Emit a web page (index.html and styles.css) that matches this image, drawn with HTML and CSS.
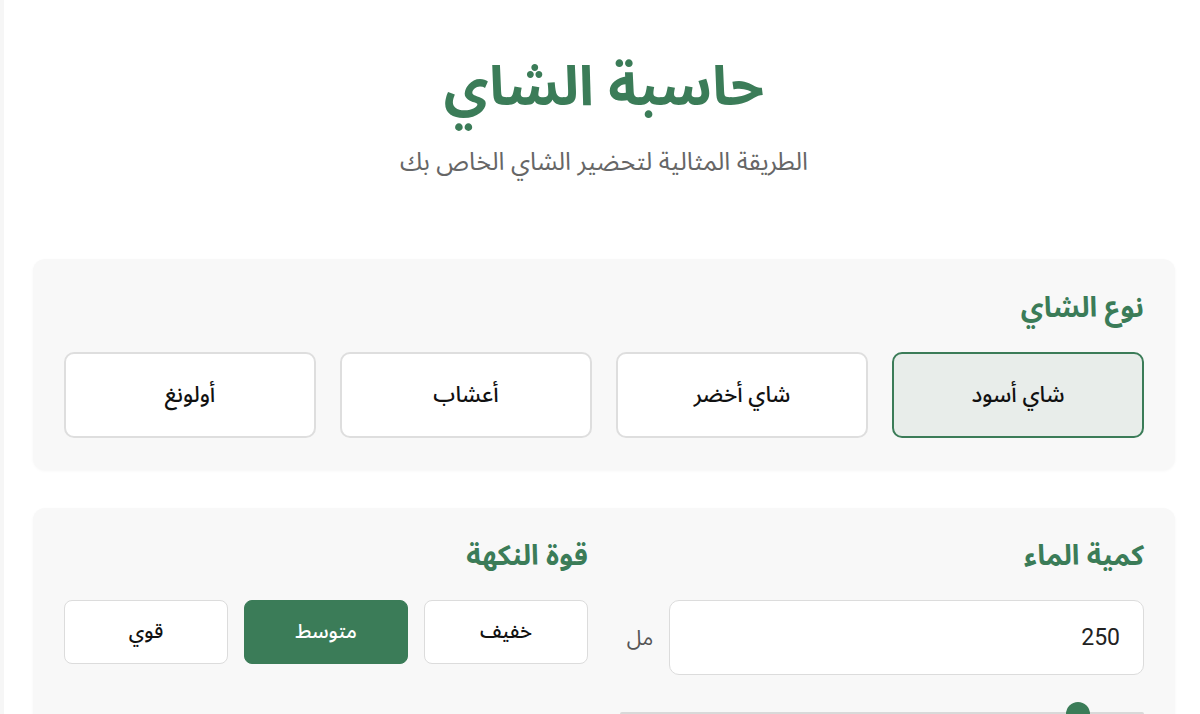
FILE: index.html
```html
<!DOCTYPE html>
<html lang="ar" dir="rtl">
<head>
<meta charset="utf-8">
<title>حاسبة الشاي</title>
<link rel="stylesheet" href="styles.css">
</head>
<body>
<div class="page">
  <header class="header">
    <h1 class="title">حاسبة الشاي</h1>
    <p class="subtitle">الطريقة المثالية لتحضير الشاي الخاص بك</p>
  </header>

  <section class="card">
    <h2 class="card-title">نوع الشاي</h2>
    <div class="type-grid">
      <button class="type-btn active">شاي أسود</button>
      <button class="type-btn">شاي أخضر</button>
      <button class="type-btn">أعشاب</button>
      <button class="type-btn">أولونغ</button>
    </div>
  </section>

  <section class="card card-two">
    <div class="col">
      <h2 class="card-title">كمية الماء</h2>
      <div class="input-row">
        <div class="num-input">250</div>
        <span class="unit">مل</span>
      </div>
      <div class="slider">
        <div class="track"></div>
        <div class="thumb"></div>
      </div>
    </div>
    <div class="col">
      <h2 class="card-title">قوة النكهة</h2>
      <div class="strength-row">
        <button class="str-btn">خفيف</button>
        <button class="str-btn active">متوسط</button>
        <button class="str-btn">قوي</button>
      </div>
    </div>
  </section>
</div>
</body>
</html>
```

FILE: styles.css
```css
* { box-sizing: border-box; }
html, body { margin: 0; padding: 0; background: #fff; }
body {
  font-family: "Noto Sans Arabic", "Noto Sans", "DejaVu Sans", sans-serif;
  color: #222;
  overflow: hidden;
  height: 714px;
  border-left: 4px solid #f6f6f6;
}
.page {
  width: 1142px;
  margin-right: 25px;
  margin-left: 29px;
}
.header {
  text-align: center;
  padding-top: 47px;
  height: 259px;
}
.title {
  margin: 0;
  font-size: 55px;
  font-weight: 700;
  color: #3b7c58;
  line-height: 82px;
}
.subtitle {
  margin: 15px 0 0;
  font-size: 25px;
  color: #666;
  line-height: 36px;
}
.card {
  background: #f8f8f8;
  border-radius: 12px;
  padding: 28px 31px 32px;
  box-shadow: 0 1px 3px rgba(0,0,0,0.04);
  margin-bottom: 38px;
}
.card-title {
  margin: 0 0 21px;
  font-size: 28px;
  font-weight: 700;
  color: #3b7c58;
  line-height: 44px;
}
.type-grid {
  display: grid;
  grid-template-columns: repeat(4, 1fr);
  gap: 24px;
}
.type-btn {
  font-family: inherit;
  height: 86px;
  border: 2px solid #dedede;
  border-radius: 10px;
  background: #fff;
  font-size: 22px;
  font-weight: 500;
  color: #111;
}
.type-btn.active {
  border-color: #3b7c58;
  background: #e8edea;
}
.card-two {
  display: grid;
  grid-template-columns: 1fr 1fr;
  gap: 32px;
  padding-top: 27px;
}
.input-row {
  display: flex;
  align-items: center;
  gap: 9px;
}
.num-input {
  flex: 1;
  height: 75px;
  border: 1px solid #dcdcdc;
  border-radius: 10px;
  background: #fff;
  font-family: Roboto, "Liberation Sans", sans-serif;
  font-size: 23px;
  color: #222;
  display: flex;
  align-items: center;
  padding: 0 23px;
}
.unit {
  font-size: 21px;
  color: #555;
  width: 40px;
  text-align: center;
}
.slider {
  position: relative;
  margin-top: 27px;
  height: 24px;
}
.track {
  position: absolute;
  left: 0; right: 0; top: 10px;
  height: 4px;
  background: #d9d9d9;
  border-radius: 2px;
}
.thumb {
  position: absolute;
  right: 54px;
  top: 0;
  width: 24px;
  height: 24px;
  border-radius: 50%;
  background: #3b7c58;
}
.strength-row {
  display: grid;
  grid-template-columns: repeat(3, 1fr);
  gap: 16px;
}
.str-btn {
  font-family: inherit;
  height: 64px;
  border: 1px solid #dcdcdc;
  border-radius: 8px;
  background: #fff;
  font-size: 20px;
  font-weight: 500;
  color: #111;
}
.str-btn.active {
  background: #3b7c58;
  border-color: #3b7c58;
  color: #fff;
}
```
